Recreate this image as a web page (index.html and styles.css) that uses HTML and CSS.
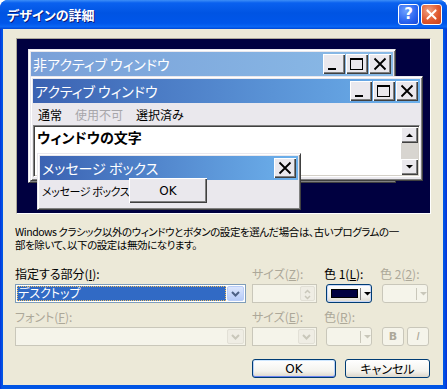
FILE: index.html
```html
<!DOCTYPE html>
<html lang="ja">
<head>
  <meta charset="UTF-8">
  <title>デザインの詳細</title>
  <link rel="stylesheet" href="styles.css">
</head>
<body>
  <div class="dialog">
    <div class="titlebar">
      <span class="title">デザインの詳細</span>
      <span class="tb-btn tb-help">?</span>
      <span class="tb-btn tb-close">
        <svg width="21" height="21" viewBox="0 0 21 21"><path d="M6 6 L15 15 M15 6 L6 15" stroke="#fff" stroke-width="2.2" stroke-linecap="round"/></svg>
      </span>
    </div>

    <div class="client">
      <!-- preview of the window parts -->
      <div class="preview">
        <div class="win win-inactive">
          <div class="caption caption-inactive">
            <span class="caption-text">非アクティブ ウィンドウ</span>
            <div class="caption-btns">
              <span class="cbtn"><svg width="22" height="20"><rect x="5" y="14" width="8" height="2"/></svg></span>
              <span class="cbtn"><svg width="22" height="20"><rect x="4.5" y="4.5" width="12" height="11" fill="none" stroke="#000"/><rect x="4" y="4" width="13" height="2"/></svg></span>
              <span class="cbtn"><svg width="22" height="20"><path d="M5.5 4.5 L16.5 15.5 M16.5 4.5 L5.5 15.5" stroke="#000" stroke-width="1.8"/></svg></span>
            </div>
          </div>
        </div>

        <div class="win win-active">
          <div class="caption">
            <span class="caption-text">アクティブ ウィンドウ</span>
            <div class="caption-btns">
              <span class="cbtn"><svg width="22" height="20"><rect x="5" y="14" width="8" height="2"/></svg></span>
              <span class="cbtn"><svg width="22" height="20"><rect x="4.5" y="4.5" width="12" height="11" fill="none" stroke="#000"/><rect x="4" y="4" width="13" height="2"/></svg></span>
              <span class="cbtn"><svg width="22" height="20"><path d="M5.5 4.5 L16.5 15.5 M16.5 4.5 L5.5 15.5" stroke="#000" stroke-width="1.8"/></svg></span>
            </div>
          </div>
          <div class="menubar">
            <span>通常</span>
            <span class="menu-disabled">使用不可</span>
            <span>選択済み</span>
          </div>
          <div class="textbox">
            <span class="wintext">ウィンドウの文字</span>
            <div class="scrollbar">
              <span class="sbtn"><svg width="17" height="16"><path d="M5 10 L12 10 L8.5 6.5 Z"/></svg></span>
              <span class="strack"></span>
              <span class="sbtn"><svg width="17" height="16"><path d="M5 6 L12 6 L8.5 9.5 Z"/></svg></span>
            </div>
          </div>
        </div>

        <div class="win msgbox">
          <div class="caption">
            <span class="caption-text">メッセージ ボックス</span>
            <div class="caption-btns">
              <span class="cbtn"><svg width="22" height="20"><path d="M5.5 4.5 L16.5 15.5 M16.5 4.5 L5.5 15.5" stroke="#000" stroke-width="1.8"/></svg></span>
            </div>
          </div>
          <div class="msgtext">メッセージ ボックスの文字</div>
          <span class="msg-ok">OK</span>
        </div>
      </div>

      <p class="note">Windows クラシック以外のウィンドウとボタンの設定を選んだ場合は、古いプログラムの一<br>部を除いて、以下の設定は無効になります。</p>

      <div class="form">
        <label class="lbl">指定する部分(<u>I</u>):</label>
        <label class="lbl lbl-off">サイズ(<u>Z</u>):</label>
        <label class="lbl lbl-shift">色 1(<u>L</u>):</label>
        <label class="lbl lbl-off lbl-shift">色 2(<u>2</u>):</label>

        <div class="combo combo-wide">
          <span class="combo-value">デスクトップ</span>
          <span class="dd-btn"><svg width="17" height="15"><path d="M5 6 L8.5 9.5 L12 6" fill="none" stroke="#4d6185" stroke-width="2"/></svg></span>
        </div>
        <div class="combo combo-off combo-size">
          <span class="combo-value"></span>
          <span class="spin">
            <svg width="15" height="17"><path d="M5 7 L7.5 4.5 L10 7" fill="none" stroke="#c9c7ba" stroke-width="1.5"/><path d="M5 10 L7.5 12.5 L10 10" fill="none" stroke="#c9c7ba" stroke-width="1.5"/></svg>
          </span>
        </div>
        <div class="colorbtn">
          <span class="swatch"></span>
          <span class="sep"></span>
          <svg width="7" height="5"><path d="M0 1 L7 1 L3.5 4.5 Z" fill="#000"/></svg>
        </div>
        <div class="colorbtn colorbtn-off">
          <span class="swatch swatch-none"></span>
          <span class="sep"></span>
          <svg width="7" height="5"><path d="M0 1 L7 1 L3.5 4.5 Z" fill="#c9c7ba"/></svg>
        </div>

        <label class="lbl lbl2 lbl-off">フォント(<u>F</u>):</label>
        <label class="lbl lbl2 lbl-off">サイズ(<u>E</u>):</label>
        <label class="lbl lbl2 lbl-off lbl-shift">色(<u>R</u>):</label>
        <span class="lbl lbl2"></span>

        <div class="combo combo-off combo-wide">
          <span class="combo-value"></span>
          <span class="dd-btn dd-off"><svg width="17" height="15"><path d="M5 6 L8.5 9.5 L12 6" fill="none" stroke="#c9c7ba" stroke-width="2"/></svg></span>
        </div>
        <div class="combo combo-off combo-size">
          <span class="combo-value"></span>
          <span class="dd-btn dd-off"><svg width="17" height="15"><path d="M5 6 L8.5 9.5 L12 6" fill="none" stroke="#c9c7ba" stroke-width="2"/></svg></span>
        </div>
        <div class="colorbtn colorbtn-off">
          <span class="swatch swatch-none"></span>
          <span class="sep"></span>
          <svg width="7" height="5"><path d="M0 1 L7 1 L3.5 4.5 Z" fill="#c9c7ba"/></svg>
        </div>
        <div class="style-btns">
          <span class="stylebtn stylebtn-b">B</span>
          <span class="stylebtn stylebtn-i">I</span>
        </div>
      </div>

      <div class="actions">
        <span class="btn btn-default">OK</span>
        <span class="btn">キャンセル</span>
      </div>
    </div>
  </div>
</body>
</html>
```

FILE: styles.css
```css
* {
  box-sizing: border-box;
}

body {
  margin: 0;
  background: #fff;
  font-family: "Noto Sans CJK JP", "Noto Sans", sans-serif;
  font-size: 12px;
  font-feature-settings: "palt";
  color: #000;
}

.dialog {
  width: 447px;
  height: 389px;
  display: flex;
  flex-direction: column;
  background: linear-gradient(to right, #0831d9 0px, #0055e5 2px, #0055e5 444px, #0831d9 447px);
  border-radius: 8px 8px 0 0;
  overflow: hidden;
}

/* title bar */
.titlebar {
  height: 29px;
  display: flex;
  align-items: center;
  gap: 2px;
  padding: 0 5px 0 7px;
  background: linear-gradient(to bottom, #3d8ef7 0%, #0a61ef 10%, #0054e3 45%, #0056ea 80%, #0a66f5 92%, #0046d5 100%);
}

.title {
  flex: 1;
  color: #fff;
  font-size: 13px;
  font-weight: bold;
  line-height: 16px;
  text-shadow: 1px 1px #0a1a7a;
}

.tb-btn {
  width: 21px;
  height: 21px;
  border: 1px solid #fff;
  border-radius: 3px;
  display: flex;
  align-items: center;
  justify-content: center;
}

.tb-help {
  background: radial-gradient(circle at 35% 30%, #6ea0ff, #2a64f0 60%, #1846d8);
  color: #fff;
  font-family: "DejaVu Sans", sans-serif;
  font-weight: bold;
  font-size: 15px;
  line-height: 19px;
}

.tb-close {
  background: radial-gradient(circle at 35% 30%, #f0a283, #e0592f 55%, #c8401c);
}

.tb-close svg {
  display: block;
}

/* client area */
.client {
  flex: 1;
  margin: 0 4px 4px 3px;
  background: #ece9d8;
  padding: 9px 13px 0 12px;
}

.preview {
  position: relative;
  margin-left: 1px;
  width: 415px;
  height: 176px;
  background: #000040;
  border: 1px solid;
  border-color: #aca899 #fff #fff #aca899;
  overflow: hidden;
}

/* sample windows in the preview */
.win {
  position: absolute;
  background: #eae8ed;
  border: 1px solid;
  border-color: #eae8ed #404040 #404040 #eae8ed;
  box-shadow: inset 1px 1px #fff, inset -1px -1px #808080;
  padding: 2px;
}

.win-inactive {
  left: 11px;
  top: 10px;
  width: 368px;
  height: 134px;
}

.win-active {
  left: 13px;
  top: 37px;
  width: 393px;
  height: 105px;
}

.msgbox {
  left: 20px;
  top: 114px;
  width: 264px;
  height: 57px;
}

.caption {
  height: 24px;
  display: flex;
  align-items: center;
  padding-left: 2px;
  background: linear-gradient(to right, #3b62b2, #6db1ec);
  color: #fff;
}

.caption-inactive {
  background: linear-gradient(to right, #7aa0d8, #8abbe7);
}

.caption-text {
  flex: 1;
  font-size: 14px;
  line-height: 18px;
  white-space: nowrap;
}

.caption-btns {
  display: flex;
  gap: 1px;
  padding-right: 2px;
}

.cbtn {
  width: 22px;
  height: 20px;
  background: #eae8ed;
  box-shadow: inset 1px 1px #fff, inset -1px -1px #404040, inset -2px -2px #808080;
}

.cbtn svg {
  display: block;
}

.menubar {
  height: 22px;
  display: flex;
  align-items: center;
  gap: 13px;
  padding-left: 5px;
  font-size: 12px;
}

.menu-disabled {
  color: #a7a6aa;
}

.textbox {
  height: 52px;
  display: flex;
  background: #fff;
  border: 1px solid;
  border-color: #808080 #fff #fff #808080;
  box-shadow: inset 1px 1px #404040, inset -1px -1px #d4d0c8;
  padding: 2px 1px 1px 2px;
}

.wintext {
  flex: 1;
  font-size: 14px;
  font-weight: bold;
  line-height: 18px;
  padding-left: 1px;
}

.scrollbar {
  width: 17px;
  margin-top: -1px;
  display: flex;
  flex-direction: column;
}

.sbtn {
  height: 16px;
  background: #eae8ed;
  box-shadow: inset 1px 1px #fff, inset -1px -1px #404040, inset -2px -2px #808080;
}

.sbtn svg {
  display: block;
}

.strack {
  flex: 1;
  background: #d8d5d0;
}

.msgtext {
  padding: 3px 0 0 2px;
  font-size: 11px;
  letter-spacing: -0.4px;
  line-height: 16px;
  white-space: nowrap;
}

.msg-ok {
  position: absolute;
  left: 91px;
  top: 24px;
  width: 78px;
  height: 25px;
  display: flex;
  align-items: center;
  justify-content: center;
  background: #eae8ed;
  box-shadow: inset 1px 1px #fff, inset -1px -1px #404040, inset -2px -2px #808080;
  font-family: "DejaVu Sans", sans-serif;
  font-size: 12px;
}

/* note and form */
.note {
  margin: 11px 0 0 0;
  font-size: 10.5px;
  line-height: 13px;
  letter-spacing: -0.45px;
  white-space: nowrap;
}

.form {
  margin-top: 16px;
  display: grid;
  grid-template-columns: 237px 74px 56px 47px;
}

.lbl {
  height: 13px;
  line-height: 13px;
  margin-bottom: 4px;
  font-size: 12px;
  white-space: nowrap;
}

.lbl2 {
  margin-top: 7px;
}

.lbl-off {
  color: #aca899;
}

.lbl-shift {
  margin-left: -2px;
}

.combo {
  height: 19px;
  display: flex;
  border: 1px solid #7f9db9;
  background: #fff;
  padding: 1px;
}

.combo-wide {
  width: 231px;
}

.combo-size {
  width: 65px;
}

.combo-off {
  border-color: #c9c7ba;
  background: #f5f4ea;
}

.combo-value {
  flex: 1;
  font-size: 12px;
  line-height: 13px;
  padding-left: 1px;
}

.combo-wide .combo-value {
  margin-right: 1px;
}

.combo:not(.combo-off) .combo-value {
  background: #316ac5;
  color: #fff;
  outline: 1px dotted #f0c060;
  outline-offset: -1px;
}

.dd-btn {
  width: 17px;
  height: 15px;
  border: 1px solid #b9cdf8;
  border-radius: 2px;
  background: linear-gradient(#dce6fd, #b6cbf8);
}

.dd-btn svg,
.spin svg {
  display: block;
  margin: -1px;
}

.dd-off {
  border-color: #e2e0d6;
  background: #efede4;
}

.spin {
  width: 15px;
  height: 15px;
  border: 1px solid #e2e0d6;
  border-radius: 2px;
  background: #efede4;
  overflow: hidden;
}

.colorbtn {
  width: 46px;
  height: 19px;
  display: flex;
  align-items: center;
  padding-left: 4px;
  border: 1px solid #003c74;
  border-radius: 3px;
  background: linear-gradient(#fff, #f0efea 70%, #dcd8cc);
  box-shadow: inset 0 0 0 1px #c6d6f8;
}

.swatch {
  width: 29px;
  height: 9px;
  background: #000040;
  border: 1px solid #000;
}

.swatch-none {
  background: none;
  border: none;
}

.sep {
  width: 1px;
  height: 12px;
  margin: 0 3px 0 2px;
  background: #808080;
}

.colorbtn-off {
  border-color: #c9c7ba;
  background: #f5f4ea;
  box-shadow: none;
}

.colorbtn-off .sep {
  background: #c9c7ba;
}

.style-btns {
  display: flex;
  gap: 3px;
}

.stylebtn {
  width: 22px;
  height: 19px;
  display: flex;
  align-items: center;
  justify-content: center;
  border: 1px solid #c9c7ba;
  border-radius: 3px;
  background: #f5f4ea;
  color: #aca899;
  font-family: "DejaVu Sans", sans-serif;
  font-size: 11px;
}

.stylebtn-b {
  font-weight: bold;
}

.stylebtn-i {
  font-style: italic;
}

.actions {
  display: flex;
  justify-content: flex-end;
  gap: 9px;
  margin-top: 13px;
}

.btn {
  width: 85px;
  height: 19px;
  display: flex;
  align-items: center;
  justify-content: center;
  border: 1px solid #003c74;
  border-radius: 3px;
  background: linear-gradient(#fff, #f4f3ee 65%, #dcd7cb);
  font-size: 12px;
}

.btn-default {
  width: 84px;
  box-shadow: inset 0 1px #cee7ff, inset 0 -1px #6982ee, inset 1px 0 #b8d0f8, inset -1px 0 #b8d0f8;
  font-family: "DejaVu Sans", sans-serif;
}
```
